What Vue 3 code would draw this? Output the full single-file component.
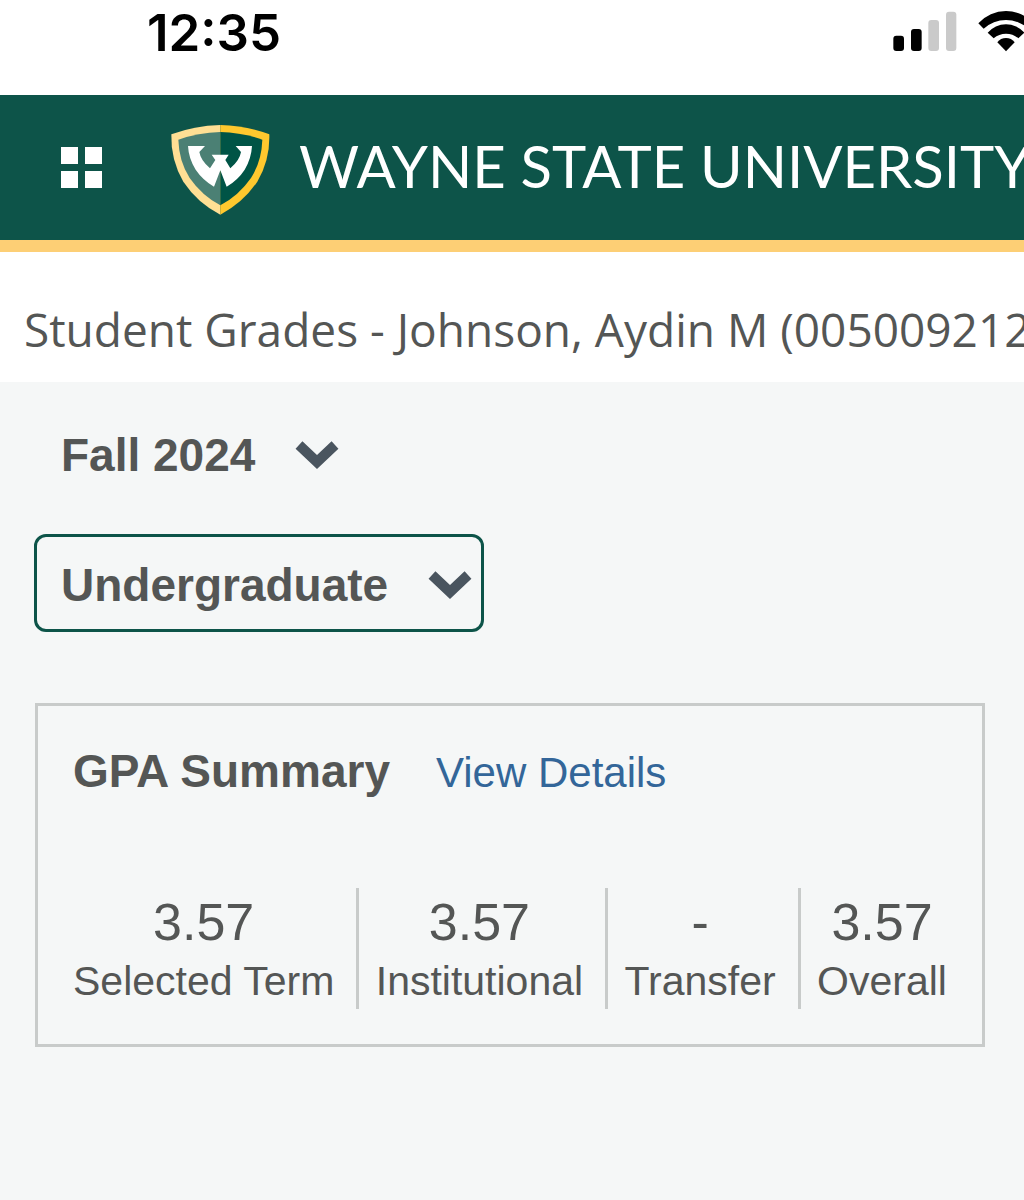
<template>
  <div class="page">
    <div class="status-bar">
      <time class="clock">12:35</time>
      <div class="status-icons">
        <svg class="signal" viewBox="39 30 192 126" role="img" aria-label="Signal strength">
          <rect x="40" y="107" width="32" height="46" rx="9" fill="#000" />
          <rect x="93" y="87" width="32" height="66" rx="9" fill="#000" />
          <rect x="145" y="60" width="32" height="93" rx="9" fill="#cacaca" />
          <rect x="198" y="35" width="31" height="118" rx="9" fill="#cacaca" />
        </svg>
        <svg class="wifi" viewBox="294 30 168 126" role="img" aria-label="Wi-Fi">
          <path d="M295 70A112 112 0 0 1 461 70L445 86A99 99 0 0 0 311 86Z" />
          <path d="M323 98A72 72 0 0 1 433 98L415 115A57 57 0 0 0 341 115Z" />
          <path d="M352 127A32 32 0 0 1 404 127L378 154Z" />
        </svg>
      </div>
    </div>

    <header class="brand-bar">
      <button class="menu-button" type="button" aria-label="Menu">
        <span v-for="n in 4" :key="n" class="tile"></span>
      </button>
      <a class="brand" href="#">
        <svg class="shield" viewBox="390 38 300 282" aria-hidden="true">
          <path fill="#ffdf94" d="M541 44Q463 46 394 72Q392 150 430 214Q472 277 541 313Z" />
          <path fill="#ffc82e" d="M541 44Q619 46 688 72Q690 150 652 214Q610 277 541 313Z" />
          <path fill="#4b8074" d="M541 65Q475 67 415 88Q417 153 449 203Q486 256 541 285Z" />
          <path fill="#005446" d="M541 65Q607 67 667 88Q665 153 633 203Q596 256 541 285Z" />
          <path
            fill="#fff"
            d="M444 107H495L478 125Q482 150 510 174L526 149L515 133H566L556 149L571 174Q599 150 603 125L587 107H636Q634 145 614 178Q594 209 560 229L541 180L522 229Q488 209 467 178Q446 145 444 107Z"
          />
        </svg>
        <span class="wordmark">WAYNE STATE UNIVERSITY</span>
      </a>
    </header>

    <h1 class="title">Student Grades - Johnson, Aydin M (005009212)</h1>

    <main class="content">
      <div class="filters">
        <div v-for="filter in filters" :key="filter.label" class="picker" :class="{ active: filter.active }">
          <select v-model="filter.value" :aria-label="filter.label">
            <option v-for="option in filter.options" :key="option">{{ option }}</option>
          </select>
          <svg class="chevron" viewBox="0 0 44 32" aria-hidden="true">
            <path d="M4 6L22 23L40 6" />
          </svg>
        </div>
      </div>

      <section class="card">
        <div class="card-head">
          <h2>GPA Summary</h2>
          <a href="#">View Details</a>
        </div>
        <dl class="stats">
          <div v-for="stat in stats" :key="stat.label" class="stat">
            <dt>{{ stat.label }}</dt>
            <dd>{{ stat.value }}</dd>
          </div>
        </dl>
      </section>
    </main>
  </div>
</template>

<script setup>
import { ref } from 'vue';

const filters = ref([
  { label: 'Term', value: 'Fall 2024', options: ['Fall 2024'], active: false },
  { label: 'Level', value: 'Undergraduate', options: ['Undergraduate'], active: true }
]);

const stats = [
  { label: 'Selected Term', value: '3.57' },
  { label: 'Institutional', value: '3.57' },
  { label: 'Transfer', value: '-' },
  { label: 'Overall', value: '3.57' }
];
</script>

<style>
body {
  margin: 0;
  background-color: #f5f7f7;
}
</style>

<style scoped>
.page {
  min-height: 100vh;
  overflow-x: hidden;
  background-color: #f5f7f7;
  color: #545655;
  font-family: "Liberation Sans", Arial, sans-serif;
}

.status-bar {
  display: flex;
  justify-content: space-between;
  padding: 3px 0 32px 147px;
  background-color: #fff;
}

.clock {
  color: #000;
  font-family: Inter, sans-serif;
  font-size: 51px;
  font-weight: 600;
  line-height: 60px;
}

/* The wifi glyph runs past the right edge */
.status-icons {
  display: flex;
  gap: 21px;
  margin: 7px -10px 0 0;
}

.signal {
  width: 64px;
  height: 42px;
}

.wifi {
  width: 56px;
  height: 42px;
}

.brand-bar {
  display: flex;
  align-items: center;
  height: 145px;
  padding-left: 61px;
  border-bottom: 12px solid #fdcf75;
  background-color: #0d5449;
}

.menu-button {
  display: grid;
  flex: none;
  grid-template-columns: 17px 17px;
  gap: 7px;
  padding: 0;
  border: 0;
  background: none;
  cursor: pointer;
}

.tile {
  height: 17px;
  background-color: #fff;
}

.brand {
  display: flex;
  align-items: center;
  gap: 29px;
  margin-left: 68px;
  color: #fff;
  text-decoration: none;
}

.shield {
  flex: none;
  width: 100px;
  height: 94px;
  padding-top: 4px;
}

.wordmark {
  padding-bottom: 4px;
  font-family: Lato, sans-serif;
  font-size: 58px;
  line-height: 64px;
  white-space: nowrap;
}

.title {
  margin: 0;
  padding: 45px 0 21px 24px;
  background-color: #fff;
  font-family: "Open Sans", sans-serif;
  font-size: 46px;
  font-weight: 400;
  line-height: 64px;
  white-space: nowrap;
}

.content {
  padding: 22px 39px 40px 34px;
}

.filters {
  display: flex;
  flex-direction: column;
  align-items: flex-start;
  gap: 32px;
}

.picker {
  position: relative;
  border: 3px solid transparent;
  border-radius: 12px;
}

.picker.active {
  border-color: #0d5449;
}

.picker select {
  display: block;
  height: 92px;
  padding: 3px 92px 0 24px;
  border: 0;
  outline: 0;
  appearance: none;
  background: none;
  color: inherit;
  font-family: inherit;
  font-size: 46px;
  font-weight: 700;
}

.chevron {
  position: absolute;
  top: 32px;
  right: 9px;
  width: 44px;
  height: 32px;
  pointer-events: none;
}

.chevron path {
  fill: none;
  stroke: #4a555f;
  stroke-width: 10;
}

.card {
  margin: 71px 0 0 1px;
  padding: 38px 35px 35px;
  border: 3px solid #c8cbca;
}

.card-head {
  display: flex;
  align-items: baseline;
  gap: 46px;
}

.card-head h2 {
  margin: 0;
  font-size: 46px;
  line-height: 54px;
}

.card-head a {
  color: #336699;
  font-size: 42px;
  text-decoration: none;
}

.stats {
  display: flex;
  justify-content: space-between;
  margin: 90px 0 0;
}

.stat {
  display: flex;
  flex-direction: column-reverse;
  padding-right: 22px;
  border-right: 3px solid #c8cbca;
  text-align: center;
}

.stat:last-child {
  padding-right: 0;
  border-right: 0;
}

.stat dt {
  padding-bottom: 4px;
  font-size: 41px;
  line-height: 48px;
}

.stat dd {
  margin: 0;
  font-size: 52px;
  line-height: 69px;
}
</style>
